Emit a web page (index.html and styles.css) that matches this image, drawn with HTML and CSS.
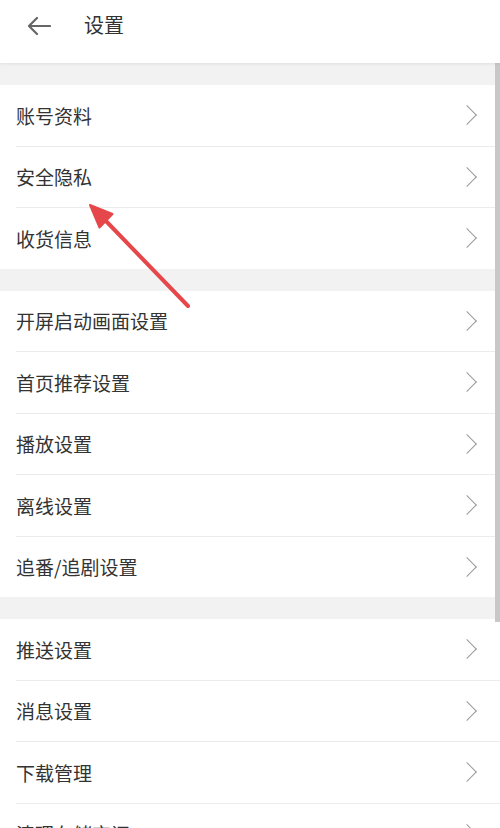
FILE: index.html
```html
<!DOCTYPE html>
<html lang="zh">
<head>
<meta charset="utf-8">
<title>设置</title>
<link rel="stylesheet" href="styles.css">
</head>
<body>
<div class="page">
  <header class="header">
    <svg class="back" width="24" height="20" viewBox="0 0 24 20"><path d="M23 10H2M10 2L2 10L10 18" fill="none" stroke="#666" stroke-width="2.2" stroke-linecap="round" stroke-linejoin="round"/></svg>
    <h1 class="title">设置</h1>
  </header>

  <section class="group">
    <div class="row"><span>账号资料</span><i class="chev"></i></div>
    <div class="sep"></div>
    <div class="row"><span>安全隐私</span><i class="chev"></i></div>
    <div class="sep"></div>
    <div class="row"><span>收货信息</span><i class="chev"></i></div>
  </section>

  <section class="group">
    <div class="row"><span>开屏启动画面设置</span><i class="chev"></i></div>
    <div class="sep"></div>
    <div class="row"><span>首页推荐设置</span><i class="chev"></i></div>
    <div class="sep"></div>
    <div class="row"><span>播放设置</span><i class="chev"></i></div>
    <div class="sep"></div>
    <div class="row"><span>离线设置</span><i class="chev"></i></div>
    <div class="sep"></div>
    <div class="row"><span>追番/追剧设置</span><i class="chev"></i></div>
  </section>

  <section class="group">
    <div class="row"><span>推送设置</span><i class="chev"></i></div>
    <div class="sep"></div>
    <div class="row"><span>消息设置</span><i class="chev"></i></div>
    <div class="sep"></div>
    <div class="row"><span>下载管理</span><i class="chev"></i></div>
    <div class="sep"></div>
    <div class="row"><span>清理存储空间</span><i class="chev"></i></div>
  </section>

  <div class="scrollbar"></div>

  <svg class="annot" width="500" height="828" viewBox="0 0 500 828">
    <line x1="188" y1="306" x2="104" y2="219" stroke="#e5474a" stroke-width="4" stroke-linecap="round"/>
    <polygon points="90,205 112.5,214 99.5,227.5" fill="#e5474a" stroke="#e5474a" stroke-width="2" stroke-linejoin="round"/>
  </svg>
</div>
</body>
</html>
```

FILE: styles.css
```css
* { box-sizing: border-box; }
html, body {
  margin: 0;
  padding: 0;
  background: #f2f2f2;
  font-family: "Noto Sans CJK SC", "Noto Sans", sans-serif;
  overflow: hidden;
}
.page {
  position: relative;
  width: 500px;
  height: 828px;
  overflow: hidden;
  background: #f2f2f2;
}
.header {
  height: 63px;
  background: #fff;
  display: flex;
  align-items: center;
  padding: 0 0 12px 27px;
  box-shadow: 0 1px 3px rgba(0,0,0,0.08);
  position: relative;
  z-index: 1;
}
.back { display: block; }
.title {
  margin: 0 0 0 33px;
  font-size: 20px;
  font-weight: normal;
  color: #333;
  line-height: 1;
  margin-top: -2px;
}
.group {
  background: #fff;
  margin-top: 22px;
}
.row {
  height: 60.5px;
  display: flex;
  align-items: center;
  justify-content: space-between;
  padding: 0 24px 0 16px;
  font-size: 19px;
  color: #333;
}
.row span { line-height: 1; }
.sep {
  height: 1px;
  margin-left: 16px;
  background: #ececec;
}
.chev {
  display: block;
  width: 14px;
  height: 14px;
  border-right: 1.6px solid #9a9a9a;
  border-top: 1.6px solid #9a9a9a;
  transform: rotate(45deg);
  margin-right: 2px;
}
.scrollbar {
  position: absolute;
  right: 0;
  top: 63px;
  width: 5px;
  height: 559px;
  background: #c8c8c8;
}
.annot {
  position: absolute;
  left: 0;
  top: 0;
  pointer-events: none;
}
```
